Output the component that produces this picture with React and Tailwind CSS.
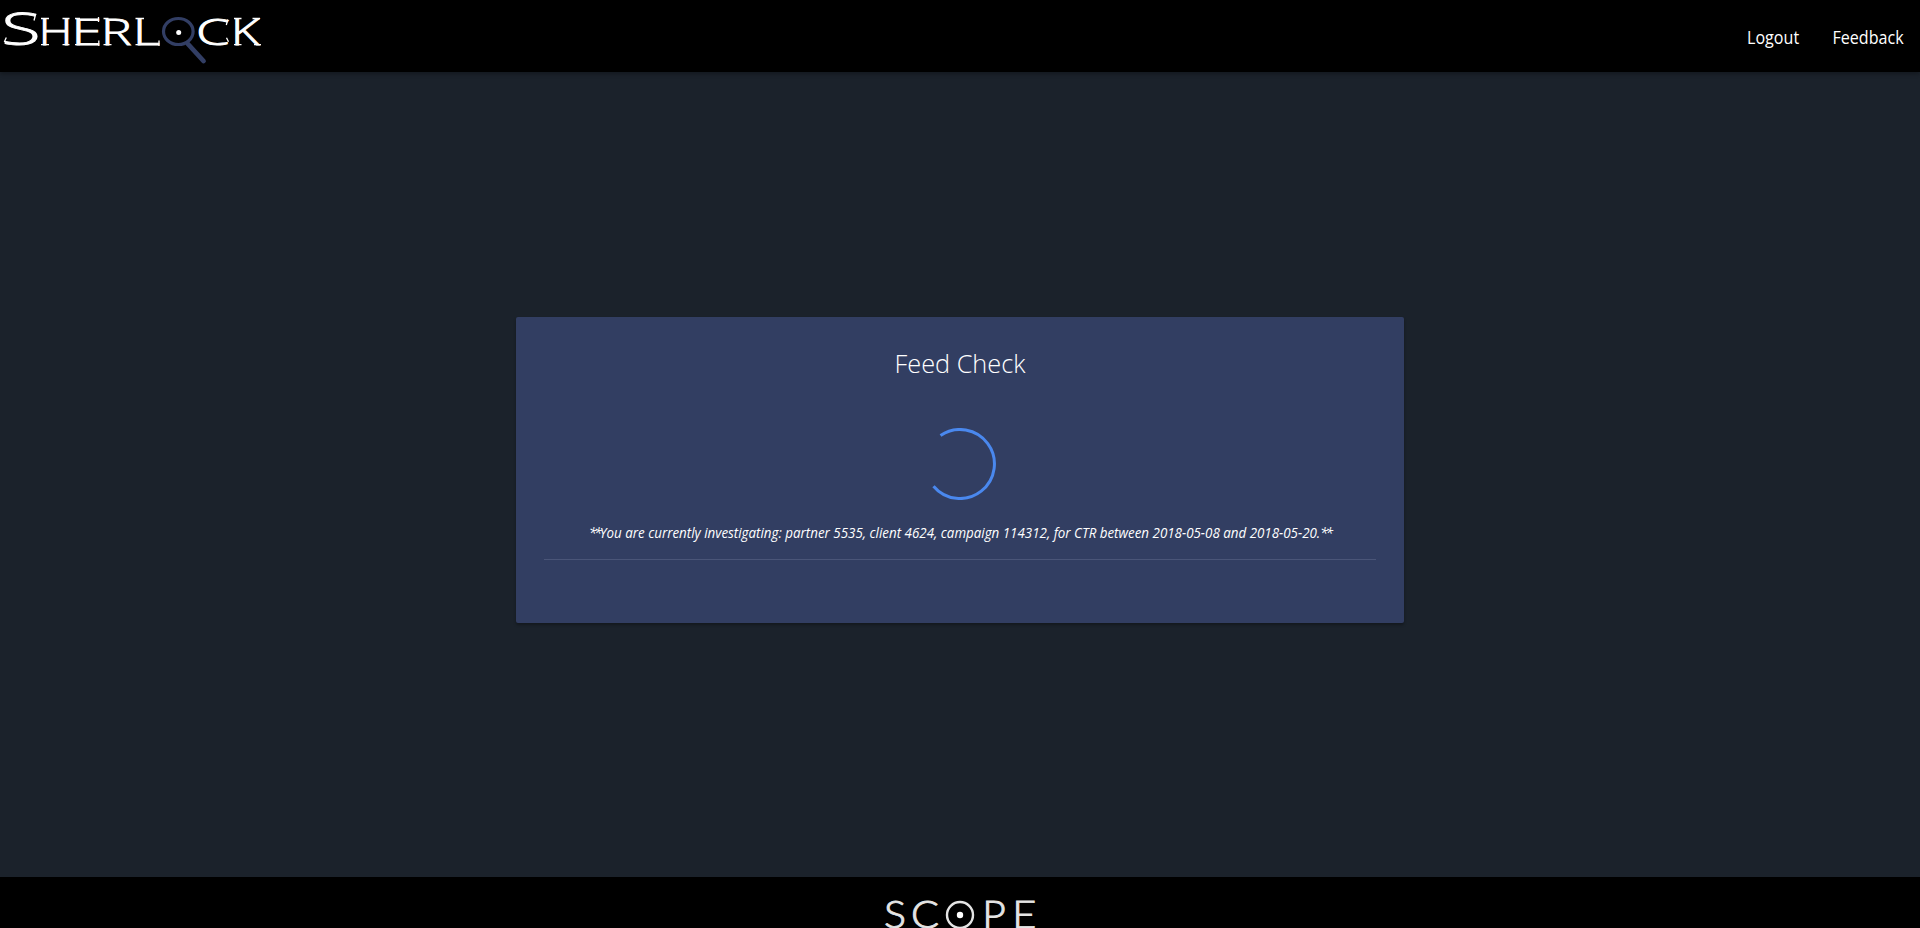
function SherlockLogo() {
  return (
    <svg width="264" height="72" viewBox="0 0 264 72" role="img" aria-label="Sherlock">
      <g fill="#fff" stroke="#fff" strokeWidth="0.9" fontFamily="'Open Sans', sans-serif" fontWeight="300" fontSize="37">
        <text x="1.5" y="45" fontSize="44" textLength="39" lengthAdjust="spacingAndGlyphs">S</text>
        <text x="38.7" y="45" textLength="33.6" lengthAdjust="spacingAndGlyphs">H</text>
        <text x="71.5" y="45" textLength="30.3" lengthAdjust="spacingAndGlyphs">E</text>
        <text x="101" y="45" textLength="30.6" lengthAdjust="spacingAndGlyphs">R</text>
        <text x="133" y="45" textLength="26.8" lengthAdjust="spacingAndGlyphs">L</text>
        <text x="196" y="45" textLength="33.8" lengthAdjust="spacingAndGlyphs">C</text>
        <text x="231" y="45" textLength="28.4" lengthAdjust="spacingAndGlyphs">K</text>
      </g>
      <path
        d="M41 18.5h8M62.5 18.5h7M41 44.6h8M62.5 44.6h7M75 18.5h5M75 44.6h5M98.5 17v5M98.8 40.5v5.5M103.5 18.5h5M103.5 44.6h8M135.5 18.5h8.5M135.5 44.6h5M159 40.5v5.5M227.8 19.5l-1.5 5.5M226.5 37.8l2 4M234 18.5h7.5M234 44.6h7.5M252.5 18.5h7.5M254 44.6h7M35.7 14l-1.7 6.5M4.3 42l2-4.5"
        fill="none"
        stroke="#fff"
        strokeWidth="1.3"
      />
      <ellipse cx="178.3" cy="31.5" rx="14.8" ry="13" fill="none" stroke="#323e64" strokeWidth="3.2" />
      <path d="M187.5 43.5L203.5 61" stroke="#323e64" strokeWidth="4.8" strokeLinecap="round" />
      <circle cx="178.7" cy="32.4" r="2.5" fill="#fff" />
    </svg>
  );
}

function ScopeLogo() {
  return (
    <svg width="160" height="51" viewBox="880 877 160 51" role="img" aria-label="Scope">
      <g fill="#e4e4e4" stroke="#e4e4e4" strokeWidth="0.9" fontFamily="Lato, sans-serif" fontWeight="300" fontSize="36.5">
        <text x="884" y="928" textLength="22" lengthAdjust="spacingAndGlyphs">S</text>
        <text x="911" y="928" textLength="28" lengthAdjust="spacingAndGlyphs">C</text>
        <text x="982.3" y="928" textLength="23.5" lengthAdjust="spacingAndGlyphs">P</text>
        <text x="1012.2" y="928" textLength="24" lengthAdjust="spacingAndGlyphs">E</text>
      </g>
      <circle cx="960" cy="915" r="13" fill="none" stroke="#e4e4e4" strokeWidth="2.4" />
      <circle cx="960" cy="915" r="3.2" fill="#fff" />
    </svg>
  );
}

function Spinner() {
  return (
    <svg width="72" height="72" viewBox="-36 -36 72 72" className="mx-auto">
      <path d="M-19.5 -28.5A34.5 34.5 0 1 1 -26.5 22.2" fill="none" stroke="#4a88ee" strokeWidth="3" />
    </svg>
  );
}

export default function App() {
  return (
    <div className="flex h-screen flex-col overflow-hidden bg-[#1b222b] font-['Open_Sans',sans-serif] text-white">
      <header className="z-10 flex h-[72px] shrink-0 items-start justify-between bg-black shadow-[0_2px_4px_rgba(0,0,0,0.3)]">
        <SherlockLogo />
        <nav className="flex origin-right scale-x-[0.925] gap-9 pt-[25px] pr-[18px] text-[17.4px] leading-6">
          <a>Logout</a>
          <a>Feedback</a>
        </nav>
      </header>
      <main className="flex flex-1 flex-col items-center pt-[245px]">
        <section className="h-[305.5px] w-[888px] rounded-xs bg-[#323e62] px-7 pt-7 text-center shadow-[0_2px_3px_rgba(0,0,0,0.3)]">
          <h1 className="scale-x-[0.955] text-[26.5px] leading-9 font-light">Feed Check</h1>
          <div className="pt-[47px]"><Spinner /></div>
          <p className="mt-[23px] scale-x-[0.954] text-[14px] leading-5 whitespace-nowrap italic">
            <span className="tracking-[-2px]">**</span>You are currently investigating: partner 5535, client 4624, campaign 114312, for CTR between 2018-05-08 and 2018-05-20.<span className="tracking-[-2px]">**</span>
          </p>
          <hr className="mt-4 border-[#4a5578]" />
        </section>
      </main>
      <footer className="flex h-[51px] shrink-0 justify-center bg-black">
        <ScopeLogo />
      </footer>
    </div>
  );
}
